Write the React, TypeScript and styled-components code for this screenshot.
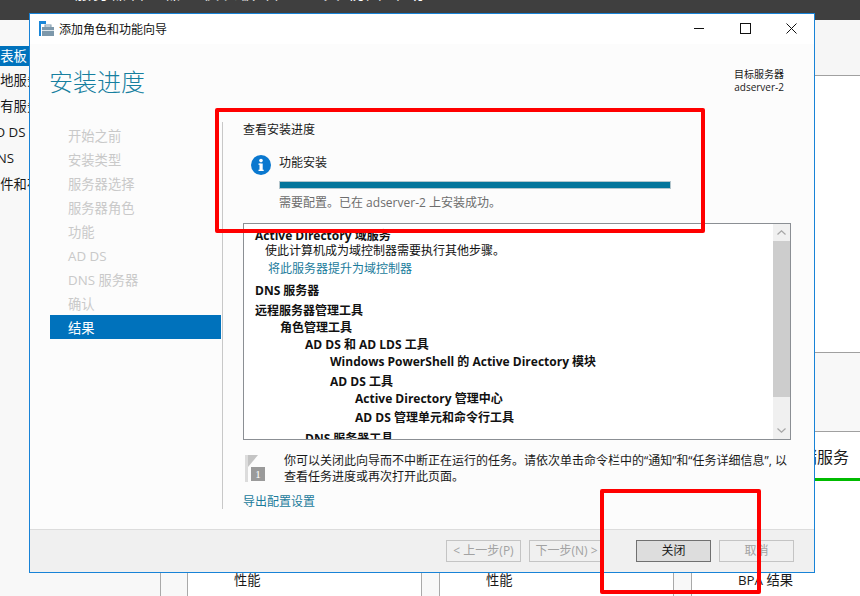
import React from 'react';
import styled, { createGlobalStyle } from 'styled-components';

const GlobalStyle = createGlobalStyle`
  html, body {
    margin: 0;
    padding: 0;
    width: 860px;
    height: 596px;
    overflow: hidden;
    background: #ffffff;
    font-family: "Open Sans", "Noto Sans CJK SC", sans-serif;
    font-size: 12px;
    color: #1a1a1a;
  }
  * {
    box-sizing: border-box;
  }
`;

const Desktop = styled.div`
  position: relative;
  width: 860px;
  height: 596px;
  overflow: hidden;
  display: flex;
  flex-direction: column;
`;

const TopBar = styled.div`
  height: 20px;
  flex: none;
  background: #3f3f3f;
  color: #ffffff;
  font-size: 16px;
  line-height: 16px;
  padding-left: 75px;
  overflow: hidden;
  span {
    display: block;
    margin-top: -15px;
    letter-spacing: 2px;
  }
`;

const Shell = styled.div`
  flex: 1;
  display: flex;
  min-height: 0;
`;

const Sidebar = styled.div`
  width: 161px;
  flex: none;
  background: #f8f8f8;
  padding-top: 26px;
  border-right: 1px solid #a9a9a9;
`;

const SideItem = styled.div<{ $active?: boolean }>`
  height: ${(p) => (p.$active ? '20px' : '26px')};
  line-height: ${(p) => (p.$active ? '20px' : '26px')};
  margin-bottom: ${(p) => (p.$active ? '1px' : '0')};
  font-size: 13.3px;
  white-space: nowrap;
  text-indent: -13px;
  overflow: hidden;
  background: ${(p) => (p.$active ? '#0072bc' : 'transparent')};
  color: ${(p) => (p.$active ? '#ffffff' : '#1a1a1a')};
`;

const Main = styled.div`
  flex: 1;
  display: flex;
  flex-direction: column;
  min-width: 0;
`;

const MainHeader = styled.div`
  height: 56px;
  flex: none;
  background: #f6f6f6;
  border-bottom: 1px solid #a0a0a0;
`;

const WelcomeArea = styled.div`
  height: 277px;
  flex: none;
  background: #ffffff;
  border-bottom: 1px solid #a0a0a0;
`;

const GroupsGap = styled.div`
  height: 79px;
  flex: none;
  background: #f8f8f8;
  border-bottom: 1px solid #a0a0a0;
`;

const CardRow = styled.div`
  flex: 1;
  display: flex;
  gap: 17px;
  padding-left: 26px;
  background: #f8f8f8;
`;

const Card = styled.div<{ $open?: boolean }>`
  width: ${(p) => (p.$open ? '200px' : '235px')};
  flex: none;
  background: #ffffff;
  border-left: 1px solid #a9a9a9;
  border-right: ${(p) => (p.$open ? 'none' : '1px solid #a9a9a9')};
  white-space: nowrap;
`;

const CardTitle = styled.div`
  height: 46px;
  padding-left: 45px;
  font-size: 16px;
  line-height: 50px;
  border-bottom: 3px solid #00bb00;
  box-sizing: content-box;
`;

const CardMetric = styled.div`
  padding: 89px 0 0 46px;
  font-size: 13.3px;
  line-height: 20px;
`;

const Wizard = styled.div`
  position: absolute;
  left: 29px;
  top: 13px;
  width: 786px;
  height: 560px;
  border: 1px solid #1883d7;
  background: #fcfcfc;
  display: flex;
  flex-direction: column;
`;

const TitleBar = styled.div`
  height: 30px;
  flex: none;
  background: #ffffff;
  display: flex;
  align-items: center;
  padding: 0 0 2px 9px;
`;

const TitleText = styled.div`
  margin: 2px 0 0 5px;
  font-size: 12px;
  flex: 1;
  color: #111111;
`;

const WindowButton = styled.div`
  width: 46px;
  height: 28px;
  flex: none;
  display: flex;
  align-items: center;
  justify-content: center;
`;

const WizardHeader = styled.div`
  height: 78px;
  flex: none;
  display: flex;
  justify-content: space-between;
  padding: 20px 30px 0 19px;
`;

const PageTitle = styled.h1`
  margin: 0;
  font-size: 24px;
  font-weight: 300;
  line-height: 36px;
  color: #167f9f;
`;

const TargetServer = styled.div`
  padding-top: 4px;
  text-align: right;
  font-size: 10px;
  line-height: 13px;
  color: #1a1a1a;
`;

const WizardBody = styled.div`
  flex: 1;
  min-height: 0;
  display: flex;
  padding-bottom: 20px;
`;

const Nav = styled.div`
  width: 171px;
  margin-left: 20px;
  flex: none;
  padding-top: 1px;
`;

const NavItem = styled.div<{ $active?: boolean }>`
  height: 24px;
  line-height: 26px;
  padding-left: 18px;
  font-size: 13.3px;
  background: ${(p) => (p.$active ? '#0072bc' : 'transparent')};
  color: ${(p) => (p.$active ? '#ffffff' : '#c9c9c9')};
`;

const Content = styled.div`
  width: 569px;
  margin-left: 1px;
  flex: none;
  border-left: 1px solid #c8c8c8;
  padding-left: 20px;
  display: flex;
  flex-direction: column;
  > * {
    flex: none;
  }
`;

const SectionHeading = styled.div`
  height: 18px;
  line-height: 18px;
  margin-top: -1px;
  font-size: 12px;
`;

const Progress = styled.div`
  margin-top: 15px;
  display: grid;
  grid-template-columns: 28px 392px;
  height: 58px;
  padding-left: 8px;
`;

const InfoIcon = styled.svg`
  width: 20px;
  height: 20px;
  margin-top: 1px;
`;

const ProgressBody = styled.div`
  display: flex;
  flex-direction: column;
`;

const ProgressLabel = styled.div`
  height: 18px;
  line-height: 18px;
`;

const ProgressTrack = styled.div`
  margin-top: 9px;
  height: 8px;
  background: #04759b;
  border: 1px solid #b4c6cd;
`;

const ProgressNote = styled.div`
  margin-top: 5px;
  line-height: 18px;
  color: #6d6d6d;
`;

const TreeBox = styled.div`
  position: relative;
  margin-top: 11px;
  width: 548px;
  height: 217px;
  border: 1px solid #8b8f94;
  background: #ffffff;
  overflow: hidden;
  padding: 3px 0 0 11px;
`;

const TreeRow = styled.div<{ $indent?: number; $gap?: number; $bold?: boolean; $link?: boolean }>`
  height: 18px;
  line-height: 18px;
  white-space: nowrap;
  margin-left: ${(p) => p.$indent ?? 0}px;
  margin-top: ${(p) => p.$gap ?? 0}px;
  font-weight: ${(p) => (p.$bold ? 700 : 400)};
  color: ${(p) => (p.$link ? '#1b7b9b' : '#111111')};
`;

const Scrollbar = styled.div`
  position: absolute;
  right: 0;
  top: 0;
  bottom: 0;
  width: 17px;
  background: #f0f0f0;
  display: flex;
  flex-direction: column;
`;

const ScrollArrow = styled.div`
  height: 17px;
  flex: none;
  display: flex;
  align-items: center;
  justify-content: center;
`;

const ScrollThumb = styled.div`
  height: 156px;
  flex: none;
  background: #cdcdcd;
`;

const ScrollTrack = styled.div`
  flex: 1;
`;

const Notice = styled.div`
  margin-top: 13px;
  display: flex;
`;

const FlagIcon = styled.div`
  position: relative;
  width: 41px;
  height: 30px;
  flex: none;
  svg {
    display: block;
    margin-left: 2px;
    margin-top: 2px;
  }
`;

const FlagBadge = styled.span`
  position: absolute;
  left: 8px;
  top: 14px;
  width: 14px;
  height: 14px;
  background: #9a9a9a;
  color: #ffffff;
  font-family: "Liberation Serif", serif;
  font-size: 11px;
  line-height: 14px;
  text-align: center;
`;

const NoticeText = styled.div`
  width: 512px;
  line-height: 16px;
  color: #1a1a1a;
`;

const ExportLink = styled.a`
  margin-top: 8px;
  line-height: 18px;
  color: #1b7b9b;
`;

const Footer = styled.div`
  height: 43px;
  flex: none;
  background: #f0f0f0;
  border-top: 1px solid #dcdcdc;
  display: flex;
  align-items: flex-start;
  justify-content: flex-end;
  padding: 10px 20px 0 0;
`;

const FooterButton = styled.div<{ $primary?: boolean; $gapLeft?: number }>`
  width: 75px;
  height: 22px;
  line-height: 20px;
  text-align: center;
  margin-left: ${(p) => p.$gapLeft ?? 8}px;
  font-size: 12px;
  border: 1px solid ${(p) => (p.$primary ? '#707070' : '#c4c4c4')};
  background: ${(p) => (p.$primary ? '#dddddd' : '#f0f0f0')};
  color: ${(p) => (p.$primary ? '#1a1a1a' : '#a2a2a2')};
`;

const Annotation = styled.div<{ $left: number; $top: number; $width: number; $height: number }>`
  position: absolute;
  left: ${(p) => p.$left}px;
  top: ${(p) => p.$top}px;
  width: ${(p) => p.$width}px;
  height: ${(p) => p.$height}px;
  border: 4px solid #ff0000;
  border-radius: 2px;
  pointer-events: none;
`;

const navItems = ['开始之前', '安装类型', '服务器选择', '服务器角色', '功能', 'AD DS', 'DNS 服务器', '确认'];
const sideItems = ['本地服务器', '所有服务器', 'AD DS', 'DNS', '文件和存储服务'];

const App: React.FC = () => {
  return (
    <>
      <GlobalStyle />
      <Desktop>
        <TopBar>
          <span>服务器管理器 • 仪表板 管理 工具 视图 帮助</span>
        </TopBar>
        <Shell>
          <Sidebar>
            <SideItem $active>仪表板</SideItem>
            {sideItems.map((item) => (
              <SideItem key={item}>{item}</SideItem>
            ))}
          </Sidebar>
          <Main>
            <MainHeader />
            <WelcomeArea />
            <GroupsGap />
            <CardRow>
              <Card>
                <CardTitle>AD DS</CardTitle>
                <CardMetric>性能</CardMetric>
              </Card>
              <Card>
                <CardTitle>DNS</CardTitle>
                <CardMetric>性能</CardMetric>
              </Card>
              <Card $open>
                <CardTitle>文件和存储服务</CardTitle>
                <CardMetric>BPA 结果</CardMetric>
              </Card>
            </CardRow>
          </Main>
        </Shell>

        <Wizard>
          <TitleBar>
            <svg width="15" height="15" viewBox="0 0 15 15">
              <rect x="0" y="0" width="7" height="3" fill="#1a86d8" />
              <rect x="0" y="3" width="2" height="12" fill="#1a86d8" />
              <rect x="3" y="6" width="12" height="9" fill="#7d98ab" />
              <rect x="6" y="4" width="6" height="2" fill="none" stroke="#7d98ab" />
              <rect x="3" y="9" width="12" height="1" fill="#dfe7ec" />
            </svg>
            <TitleText>添加角色和功能向导</TitleText>
            <WindowButton>
              <svg width="11" height="11" viewBox="0 0 11 11">
                <path d="M0 5.5H10" stroke="#111" strokeWidth="1" />
              </svg>
            </WindowButton>
            <WindowButton>
              <svg width="11" height="11" viewBox="0 0 11 11">
                <rect x="0.5" y="0.5" width="10" height="10" fill="none" stroke="#111" />
              </svg>
            </WindowButton>
            <WindowButton>
              <svg width="11" height="11" viewBox="0 0 11 11">
                <path d="M0.5 0.5L10.5 10.5M10.5 0.5L0.5 10.5" stroke="#111" strokeWidth="1" />
              </svg>
            </WindowButton>
          </TitleBar>

          <WizardHeader>
            <PageTitle>安装进度</PageTitle>
            <TargetServer>
              <div>目标服务器</div>
              <div>adserver-2</div>
            </TargetServer>
          </WizardHeader>

          <WizardBody>
            <Nav>
              {navItems.map((item) => (
                <NavItem key={item}>{item}</NavItem>
              ))}
              <NavItem $active>结果</NavItem>
            </Nav>
            <Content>
              <SectionHeading>查看安装进度</SectionHeading>
              <Progress>
                <InfoIcon viewBox="0 0 20 20">
                  <circle cx="10" cy="10" r="10" fill="#0a78cf" />
                  <rect x="8.5" y="8.5" width="3.2" height="7.5" fill="#ffffff" />
                  <rect x="7.5" y="8.5" width="2" height="1.3" fill="#ffffff" />
                  <rect x="7.5" y="14.7" width="5.2" height="1.3" fill="#ffffff" />
                  <circle cx="10" cy="5.6" r="1.8" fill="#ffffff" />
                </InfoIcon>
                <ProgressBody>
                  <ProgressLabel>功能安装</ProgressLabel>
                  <ProgressTrack />
                  <ProgressNote>需要配置。已在 adserver-2 上安装成功。</ProgressNote>
                </ProgressBody>
              </Progress>

              <TreeBox>
                <TreeRow $bold>Active Directory 域服务</TreeRow>
                <TreeRow $indent={10} $gap={-3}>使此计算机成为域控制器需要执行其他步骤。</TreeRow>
                <TreeRow $indent={13} $link>将此服务器提升为域控制器</TreeRow>
                <TreeRow $bold $gap={4}>DNS 服务器</TreeRow>
                <TreeRow $bold $gap={2}>远程服务器管理工具</TreeRow>
                <TreeRow $bold $indent={25} $gap={-1}>角色管理工具</TreeRow>
                <TreeRow $bold $indent={50} $gap={-1}>AD DS 和 AD LDS 工具</TreeRow>
                <TreeRow $bold $indent={75} $gap={-1}>Windows PowerShell 的 Active Directory 模块</TreeRow>
                <TreeRow $bold $indent={75} $gap={2}>AD DS 工具</TreeRow>
                <TreeRow $bold $indent={100} $gap={-1}>Active Directory 管理中心</TreeRow>
                <TreeRow $bold $indent={100} $gap={1}>AD DS 管理单元和命令行工具</TreeRow>
                <TreeRow $bold $indent={50} $gap={3}>DNS 服务器工具</TreeRow>
                <Scrollbar>
                  <ScrollArrow>
                    <svg width="9" height="5" viewBox="0 0 9 5">
                      <path d="M0.5 4.5L4.5 0.8L8.5 4.5" fill="none" stroke="#a6a6a6" strokeWidth="1.2" />
                    </svg>
                  </ScrollArrow>
                  <ScrollThumb />
                  <ScrollTrack />
                  <ScrollArrow>
                    <svg width="9" height="5" viewBox="0 0 9 5">
                      <path d="M0.5 0.5L4.5 4.2L8.5 0.5" fill="none" stroke="#a6a6a6" strokeWidth="1.2" />
                    </svg>
                  </ScrollArrow>
                </Scrollbar>
              </TreeBox>

              <Notice>
                <FlagIcon>
                  <svg width="14" height="28" viewBox="0 0 14 28">
                    <rect x="0" y="0" width="3" height="27" fill="#dcdcdc" />
                    <path d="M3 0H13L3 12Z" fill="#c4c4c4" />
                  </svg>
                  <FlagBadge>1</FlagBadge>
                </FlagIcon>
                <NoticeText>
                  你可以关闭此向导而不中断正在运行的任务。请依次单击命令栏中的“通知”和“任务详细信息”, 以查看任务进度或再次打开此页面。
                </NoticeText>
              </Notice>
              <ExportLink>导出配置设置</ExportLink>
            </Content>
          </WizardBody>

          <Footer>
            <FooterButton>&lt; 上一步(P)</FooterButton>
            <FooterButton>下一步(N) &gt;</FooterButton>
            <FooterButton $primary $gapLeft={32}>关闭</FooterButton>
            <FooterButton>取消</FooterButton>
          </Footer>
        </Wizard>

        <Annotation $left={215} $top={108} $width={490} $height={125} />
        <Annotation $left={600} $top={489} $width={161} $height={105} />
      </Desktop>
    </>
  );
};

export default App;
